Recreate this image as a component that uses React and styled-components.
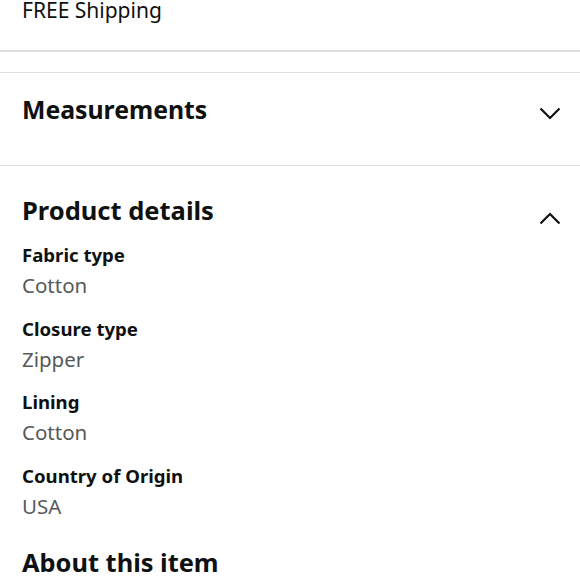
import React from "react";
import styled, { createGlobalStyle } from "styled-components";

const GlobalStyle = createGlobalStyle`
  html, body {
    margin: 0;
    padding: 0;
    background: #fff;
  }
  body {
    font-family: "Noto Sans", "Liberation Sans", sans-serif;
    color: #0f1111;
  }
`;

const details = [
  { label: "Fabric type", value: "Cotton" },
  { label: "Closure type", value: "Zipper" },
  { label: "Lining", value: "Cotton" },
  { label: "Country of Origin", value: "USA" },
];

const Chevron = ({ up }) => (
  <ChevronIcon viewBox="0 0 22 13" width="22" height="13" $up={up}>
    <polyline
      points={up ? "1.5,11.5 11,2 20.5,11.5" : "1.5,1.5 11,11 20.5,1.5"}
      fill="none"
      stroke="#0f1111"
      strokeWidth="2.2"
    />
  </ChevronIcon>
);

const App = () => {
  return (
    <Page>
      <GlobalStyle />
      <Shipping>FREE Shipping</Shipping>
      <Section>
        <Header $top={21} $bottom={41}>
          <Title>Measurements</Title>
          <Chevron />
        </Header>
      </Section>
      <Section>
        <Header $top={29} $bottom={19}>
          <Title $wide>Product details</Title>
          <Chevron up />
        </Header>
        <DetailList>
          {details.map((d) => (
            <Detail key={d.label}>
              <Label>{d.label}</Label>
              <Value>{d.value}</Value>
            </Detail>
          ))}
        </DetailList>
        <About>About this item</About>
      </Section>
    </Page>
  );
};

const Page = styled.div`
  width: 580px;
  height: 580px;
  overflow: hidden;
`;

const Shipping = styled.div`
  font-size: 21px;
  line-height: 20px;
  padding: 0 22px 30px;
  border-bottom: 2px solid #dcdcdc;
  margin-bottom: 20px;
`;

const Section = styled.section`
  border-top: 1px solid #e0e0e0;
  padding: 0 20px 0 22px;
`;

const Header = styled.div`
  display: flex;
  align-items: center;
  justify-content: space-between;
  padding-top: ${(p) => p.$top}px;
  padding-bottom: ${(p) => p.$bottom}px;
`;

const Title = styled.h2`
  margin: 0;
  font-size: ${(p) => (p.$wide ? 25.5 : 24.8)}px;
  line-height: 30px;
  font-weight: 700;
`;

const ChevronIcon = styled.svg`
  display: block;
  margin-top: ${(p) => (p.$up ? 16 : 8)}px;
  margin-right: -1px;
`;

const DetailList = styled.div`
  display: flex;
  flex-direction: column;
`;

const Detail = styled.div`
  margin-bottom: 19.5px;
`;

const Label = styled.div`
  font-size: 18.6px;
  line-height: 22px;
  font-weight: 700;
  margin-bottom: 6px;
`;

const Value = styled.div`
  font-size: 20.5px;
  line-height: 26px;
  color: #565959;
`;

const About = styled.h2`
  margin: 9px 0 0;
  font-size: 25.4px;
  line-height: 30px;
  font-weight: 700;
`;

export default App;
